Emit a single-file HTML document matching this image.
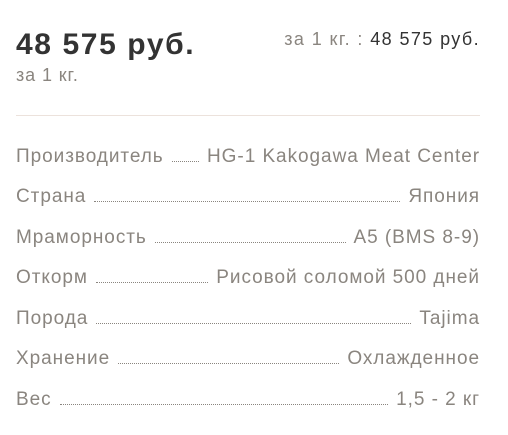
<!DOCTYPE html>
<html><head><meta charset="utf-8"><style>
body{margin:0;width:508px;height:435px;background:#fff;font-family:"Liberation Sans",sans-serif;position:relative;overflow:hidden}
.price{position:absolute;left:16px;top:28px;font-size:30px;font-weight:bold;color:#333;letter-spacing:1.6px}
.per{position:absolute;left:16px;top:65px;font-size:18px;color:#8a857f;letter-spacing:0.9px}
.tr{position:absolute;right:28px;top:29px;font-size:18px;color:#8a857f;letter-spacing:1.4px}
.tr b{font-weight:normal;color:#333}
.hr{position:absolute;left:16px;right:28px;top:115px;height:1px;background:#ece2dc}
.row{position:absolute;left:16px;right:28px;display:flex;align-items:baseline;font-size:19px;color:#8a857f;letter-spacing:0.95px}
.row .d{flex:1;border-bottom:1px dotted #8a857f;margin:0 8px;height:1px}
</style></head><body>
<div class="price">48 575 руб.</div>
<div class="per">за 1 кг.</div>
<div class="tr">за 1 кг. : <b>48 575 руб.</b></div>
<div class="hr"></div>
<div class="row" style="top:146px"><span>Производитель</span><span class="d"></span><span>HG-1 Kakogawa Meat Center</span></div>
<div class="row" style="top:186px"><span>Страна</span><span class="d"></span><span>Япония</span></div>
<div class="row" style="top:227px"><span>Мраморность</span><span class="d"></span><span>A5 (BMS 8-9)</span></div>
<div class="row" style="top:267px"><span>Откорм</span><span class="d"></span><span>Рисовой соломой 500 дней</span></div>
<div class="row" style="top:308px"><span>Порода</span><span class="d"></span><span>Tajima</span></div>
<div class="row" style="top:348px"><span>Хранение</span><span class="d"></span><span>Охлажденное</span></div>
<div class="row" style="top:389px"><span>Вес</span><span class="d"></span><span>1,5 - 2 кг</span></div>
</body></html>
